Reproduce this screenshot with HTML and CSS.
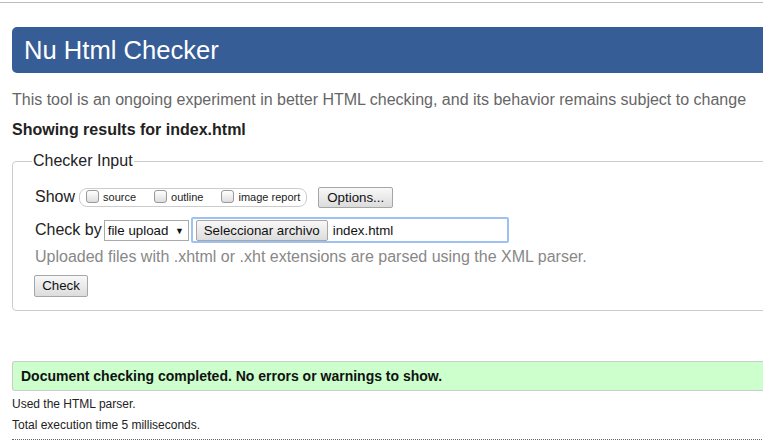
FILE: index.html
```html
<!DOCTYPE html>
<html>
<head>
<meta charset="utf-8">
<link rel="stylesheet" href="styles.css">
</head>
<body>
<div class="page">
  <div class="topline"></div>
  <h1 class="title">Nu Html Checker</h1>
  <p class="intro">This tool is an ongoing experiment in better HTML checking, and its behavior remains subject to change</p>
  <p class="showing">Showing results for index.html</p>
  <fieldset class="input">
    <legend>Checker Input</legend>
    <div class="row show-row">
      <span class="label">Show</span>
      <span class="pill">
        <label class="opt"><span class="cb"></span>source</label>
        <label class="opt"><span class="cb"></span>outline</label>
        <label class="opt"><span class="cb"></span>image report</label>
      </span>
      <span class="btn options">Options...</span>
    </div>
    <div class="row check-row">
      <span class="label">Check by</span>
      <span class="select">file upload <span class="arrow">▼</span></span>
      <span class="file"><span class="btn choose">Seleccionar archivo</span><span class="fname">index.html</span></span>
    </div>
    <p class="hint">Uploaded files with .xhtml or .xht extensions are parsed using the XML parser.</p>
    <span class="btn check">Check</span>
  </fieldset>
  <div class="success">Document checking completed. No errors or warnings to show.</div>
  <p class="meta">Used the HTML parser.</p>
  <p class="meta">Total execution time 5 milliseconds.</p>
  <div class="dotted"></div>
</div>
</body>
</html>
```
FILE: styles.css
```css
html { overflow: hidden; }
body {
  margin: 0;
  font-family: "Liberation Sans", Arial, sans-serif;
  color: #222;
  background: #fff;
}
.page {
  width: 900px;
  padding: 0 0 0 12px;
}
.topline {
  margin-top: 2px;
  margin-left: -12px;
  border-top: 1px solid #bbb;
  height: 0;
}
.title {
  margin: 24px 0 0 0;
  height: 46px;
  box-sizing: border-box;
  background: #365d95;
  color: #fff;
  border-radius: 5px;
  font-weight: normal;
  font-size: 25.6px;
  line-height: 46px;
  padding-left: 12px;
}
.intro {
  margin: 16px 0 0 0;
  font-size: 16px;
  line-height: 22px;
  color: #666;
}
.showing {
  margin: 9px 0 0 0;
  font-size: 16px;
  font-weight: bold;
  line-height: 20px;
  color: #222;
}
.input {
  margin: 12px 0 0 0;
  border: 1px solid #ccc;
  border-radius: 4px;
  padding: 6px 0 13px 22px;
  height: 159px;
  box-sizing: border-box;
}
.input legend {
  font-size: 16px;
  padding: 0 1px;
  margin-left: -3px;
  color: #222;
}
.row {
  display: flex;
  align-items: center;
}
.label {
  font-size: 16px;
  margin-right: 4px;
  white-space: nowrap;
}
.show-row { height: 22px; margin-top: 10px; }
.pill {
  display: flex;
  align-items: center;
  height: 19px;
  border: 1px solid #ccc;
  border-radius: 8px;
  padding: 0 6px 0 6px;
  box-sizing: border-box;
  white-space: nowrap;
  flex-shrink: 0;
}
.opt {
  display: flex;
  align-items: center;
  font-size: 11px;
  color: #222;
  margin-right: 18px;
  white-space: nowrap;
}
.opt:last-child { margin-right: 0; }
.cb {
  width: 11px;
  height: 11px;
  border: 1px solid #999;
  border-radius: 3px;
  background: linear-gradient(#fff, #ddd);
  margin-right: 4px;
  margin-top: -2px;
}
.btn {
  display: inline-block;
  box-sizing: border-box;
  border: 1px solid #a6a6a6;
  border-radius: 2px;
  background: linear-gradient(#f8f8f8, #dcdcdc);
  color: #111;
  font-size: 13.3px;
  text-align: center;
  white-space: nowrap;
}
.options {
  margin-left: 11px;
  width: 75px;
  height: 21px;
  line-height: 19px;
}
.check-row { margin-top: 9px; height: 26px; }
.check-row .label { margin-right: 2px; }
.select {
  width: 85px;
  height: 21px;
  box-sizing: border-box;
  border: 1px solid #a9a9a9;
  font-size: 13.3px;
  line-height: 19px;
  padding-left: 3px;
  color: #111;
  white-space: nowrap;
}
.arrow { font-size: 9px; margin-left: 3px; vertical-align: 1px; }
.file {
  display: flex;
  align-items: center;
  margin-left: 2px;
  width: 318px;
  height: 26px;
  box-sizing: border-box;
  border: 2px solid #9ec1f4;
  border-radius: 2px;
  padding-left: 3px;
}
.choose {
  width: 132px;
  height: 21px;
  line-height: 19px;
}
.fname {
  font-size: 13.3px;
  margin-left: 5px;
  color: #111;
}
.hint {
  margin: 4px 0 0 0;
  font-size: 16px;
  line-height: 20px;
  color: #888;
}
.check {
  margin-top: 8px;
  margin-left: -1px;
  width: 54px;
  height: 22px;
  line-height: 20px;
}
.success {
  margin-top: 50px;
  height: 30px;
  box-sizing: border-box;
  background: #ccffcc;
  border: 1px solid #ccc;
  border-width: 1px 0 1px 1px;
  border-radius: 3px 0 0 3px;
  font-weight: bold;
  font-size: 14px;
  line-height: 28px;
  padding-left: 8px;
  color: #111;
}
.meta {
  margin: 0;
  font-size: 12px;
  color: #222;
}
.success + .meta { margin-top: 5px; line-height: 16px; }
.meta + .meta { margin-top: 5px; line-height: 16px; }
.dotted {
  margin-top: 6px;
  border-top: 1px dotted #666;
}
```
